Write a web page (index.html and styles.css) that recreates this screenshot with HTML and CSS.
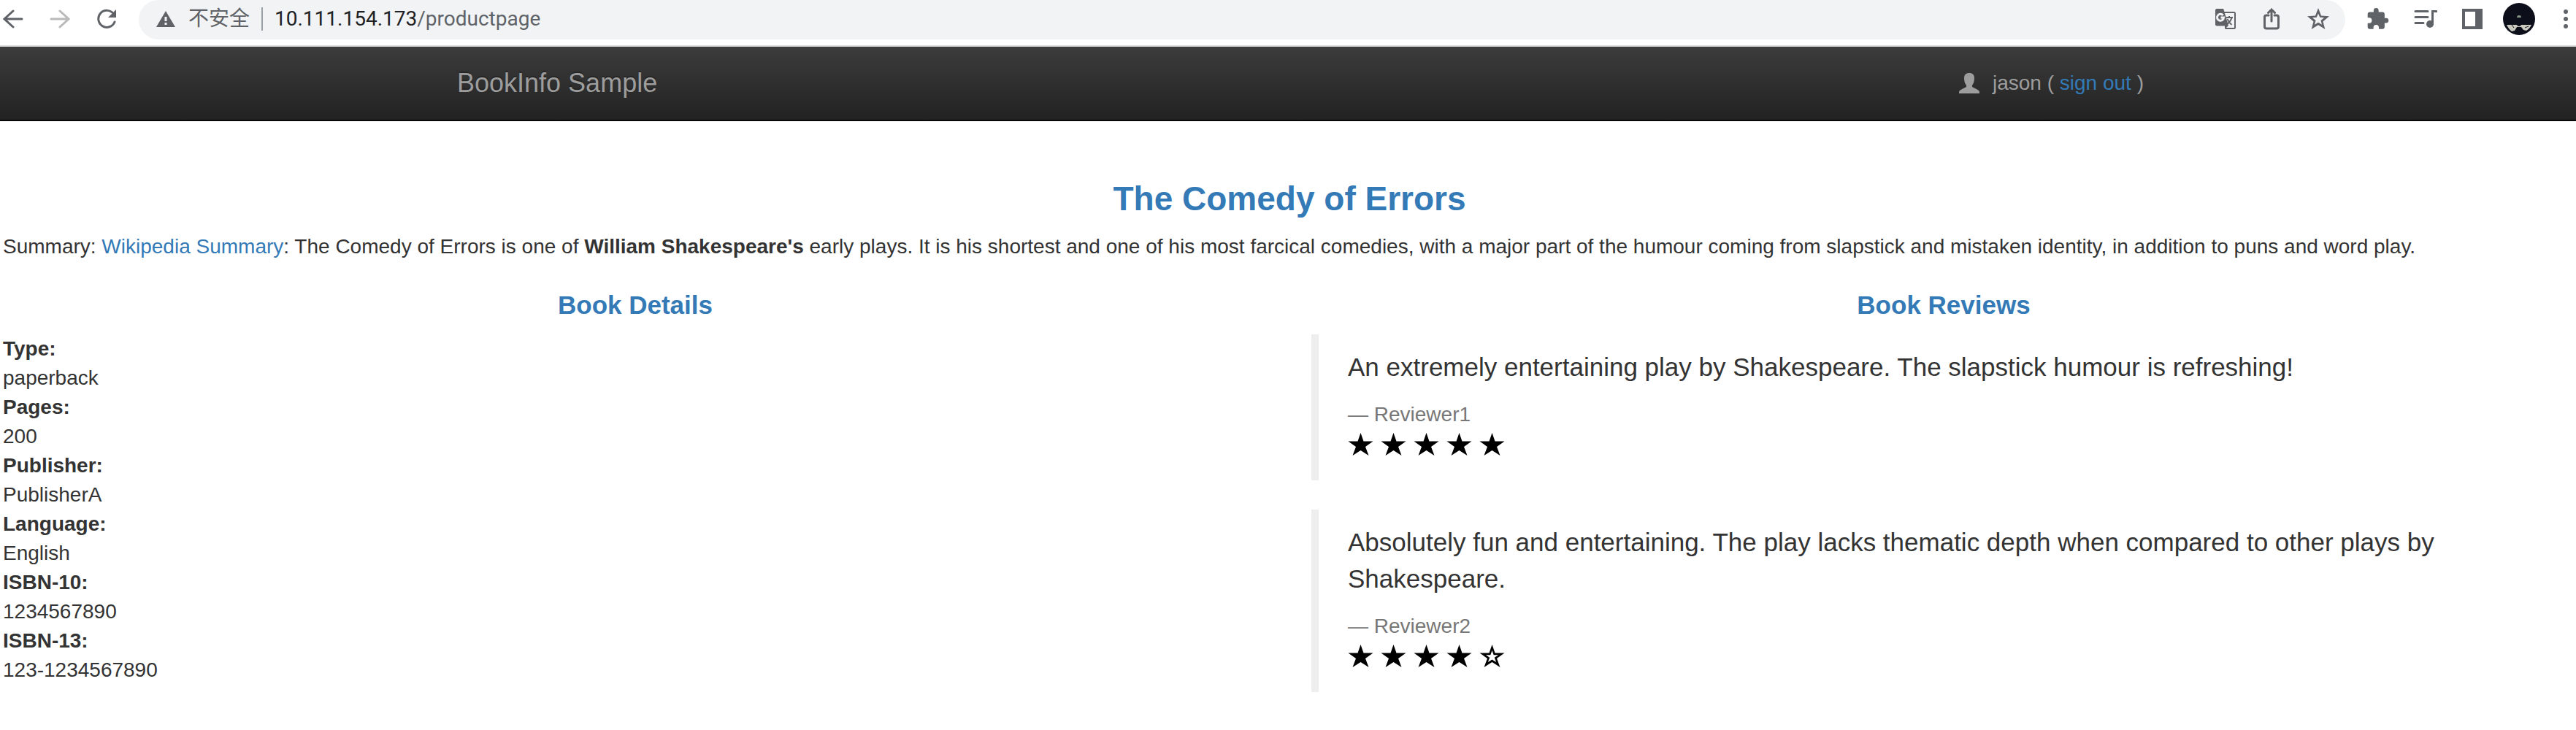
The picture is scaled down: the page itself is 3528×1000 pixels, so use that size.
FILE: index.html
```html
<!DOCTYPE html>
<html lang="en">
<head>
<meta charset="utf-8">
<meta name="viewport" content="width=device-width, initial-scale=1">
<title>Simple Bookstore App</title>
<link rel="stylesheet" href="styles.css">
</head>
<body>
<svg class="sprite" aria-hidden="true">
  <symbol id="star" viewBox="0 0 34 32"><path d="M17 0l4 11.500h13L23.500 19 28 31 17 24 6 31l4.500-12L0 11.500h13z"/></symbol>
  <symbol id="star-empty" viewBox="0 0 34 32"><path fill-rule="evenodd" d="M17 0l4 11.500h13L23.500 19 28 31 17 24 6 31l4.500-12L0 11.500h13zM17 8l-2.200 6.300H8.500l5.200 3.500-2.300 6.200L17 20.400l5.600 3.600-2.300-6.200 5.200-3.500h-6.300z"/></symbol>
</svg>

<header class="browser">
  <div class="browser-nav">
    <button class="tool" aria-label="Back"><svg width="28" height="28" viewBox="0 0 28 28" class="line"><path d="M26 14H2M14 3L2 14l12 11"/></svg></button>
    <button class="tool tool-off" aria-label="Forward"><svg width="28" height="28" viewBox="0 0 28 28" class="line"><path d="M2 14h24M14 3l12 11-12 11"/></svg></button>
    <button class="tool" aria-label="Reload"><svg width="28" height="28" viewBox="0 0 28 28"><path class="line" d="M23.500 7A11.500 11.500 0 1 0 25 18"/><path d="M27 1v11H16z"/></svg></button>
  </div>
  <div class="address">
    <svg width="26" height="22" viewBox="0 0 26 22" class="warn"><path fill-rule="evenodd" d="M13 0l13 22H0zM11.500 8v6h3V8zm0 8v3h3v-3z"/></svg>
    <span class="insecure">不安全</span>
    <span class="divider"></span>
    <span class="url"><span class="host">10.111.154.173</span>/productpage</span>
    <div class="address-tools">
      <button class="tool" aria-label="Translate">
        <svg width="28" height="28" viewBox="0 0 28 28">
          <path class="thin" d="M12 5h13.500a1.500 1.500 0 0 1 1.500 1.500v19a1.500 1.500 0 0 1-1.500 1.500H14"/>
          <path class="thin" d="M15 12h9M19 10v2M22.500 12c-1 4-3 6.500-6 9M16.500 14c1 3 3 5.500 6 8"/>
          <path d="M2 0h8.500a1 1 0 0 1 1 1L18 23l-5 5v-4.500H2a2 2 0 0 1-2-2V2a2 2 0 0 1 2-2z"/>
          <path class="glyph-g" d="M10.500 9A4.500 4.500 0 1 0 11.500 12H7.500"/>
        </svg>
      </button>
      <button class="tool" aria-label="Share"><svg width="22" height="30" viewBox="0 0 22 30" class="line"><path d="M7 10H4a2.500 2.500 0 0 0-2.500 2.500v13A2.500 2.500 0 0 0 4 28h14a2.500 2.500 0 0 0 2.500-2.500v-13A2.500 2.500 0 0 0 18 10h-3M11 18V2M6.500 6.500L11 2l4.500 4.500"/></svg></button>
      <button class="tool" aria-label="Bookmark"><svg width="30" height="30" viewBox="0 0 30 30"><path fill-rule="evenodd" d="M15 0l4 10.500 11 .8-8.500 7.200L24.300 29 15 23.300 5.700 29l2.800-10.500L0 11.300l11-.8zM15 7.500l-2.200 5.300-5.800.5 4.500 3.700-1.500 5.800 5-3 5 3-1.500-5.800 4.500-3.700-5.800-.5z"/></svg></button>
    </div>
  </div>
  <div class="browser-tools">
    <div class="extension-tools">
      <button class="tool" aria-label="Extensions"><svg width="30" height="30" viewBox="2 1 21 22"><path d="M20.500 11H19V7c0-1.100-.9-2-2-2h-4V3.500a2.500 2.500 0 0 0-5 0V5H4c-1.100 0-2 .9-2 2v3.800h1.500a2.700 2.700 0 0 1 0 5.400H2V20c0 1.100.9 2 2 2h3.800v-1.500a2.700 2.700 0 0 1 5.400 0V22H17c1.100 0 2-.9 2-2v-4h1.500a2.500 2.500 0 0 0 0-5z"/></svg></button>
      <button class="tool" aria-label="Media"><svg width="32" height="28" viewBox="0 0 32 28"><path class="line" d="M2 3.500h17M2 11.500h17M2 19.500h11"/><path d="M24 2h7a1 1 0 0 1 1 1v2h-5v17h-3z"/><circle cx="22" cy="21" r="5"/></svg></button>
      <button class="tool" aria-label="Side panel"><svg width="28" height="28" viewBox="0 0 28 28"><path fill-rule="evenodd" d="M0 0h28v28H0zM4 4v20h14V4z"/></svg></button>
    </div>
    <div class="profile-tools">
      <button class="tool" aria-label="Profile">
        <svg width="44" height="44" viewBox="0 0 44 44">
          <circle cx="22" cy="22" r="22" fill="#0c0f19"/>
          <path d="M5 30h34c-2 4-4 6-7 8l-4-1-3-4h-6l-3 5-4 1c-3-2-5-5-7-9z" fill="#c9c9c0"/>
          <path d="M19 20a3 3 0 0 1 6 0z" fill="#8a9a8a"/>
          <circle cx="22" cy="29" r="3" fill="#0c0f19"/>
          <path d="M12 30l3 4M30 34l5-2" stroke="#0c0f19"/>
        </svg>
      </button>
      <button class="tool" aria-label="Menu"><svg width="8" height="28" viewBox="0 0 8 28"><circle cx="4" cy="4" r="3"/><circle cx="4" cy="14" r="3"/><circle cx="4" cy="24" r="3"/></svg></button>
    </div>
  </div>
</header>

<nav class="navbar">
  <div class="navbar-inner">
    <a class="brand" href="#">BookInfo Sample</a>
    <p class="user">
      <svg width="28" height="28" viewBox="0 0 28 28"><path d="M14 0c4.500 0 7 2.500 7 7 0 5-1.500 8-3 10v2c3 2 7 3 9 5 1 1 1 2 1 4H0c0-2 0-3 1-4 2-2 6-3 9-5v-2c-1.500-2-3-5-3-10 0-4.500 2.500-7 7-7z"/></svg>
      <span>jason ( <a href="#">sign out</a> )</span>
    </p>
  </div>
</nav>

<main class="page">
  <h3 class="title">The Comedy of Errors</h3>
  <p class="summary">Summary: <a href="#">Wikipedia Summary</a>: The Comedy of Errors is one of <b>William Shakespeare's</b> early plays. It is his shortest and one of his most farcical comedies, with a major part of the humour coming from slapstick and mistaken identity, in addition to puns and word play.</p>
  <div class="columns">
    <section>
      <h4 class="subtitle">Book Details</h4>
      <dl class="details">
        <dt>Type:</dt><dd>paperback</dd>
        <dt>Pages:</dt><dd>200</dd>
        <dt>Publisher:</dt><dd>PublisherA</dd>
        <dt>Language:</dt><dd>English</dd>
        <dt>ISBN-10:</dt><dd>1234567890</dd>
        <dt>ISBN-13:</dt><dd>123-1234567890</dd>
      </dl>
    </section>
    <section>
      <h4 class="subtitle">Book Reviews</h4>
      <blockquote class="review">
        <p>An extremely entertaining play by Shakespeare. The slapstick humour is refreshing!</p>
        <small>— Reviewer1</small>
        <div class="stars" role="img" aria-label="5 stars">
          <svg><use href="#star"/></svg><svg><use href="#star"/></svg><svg><use href="#star"/></svg><svg><use href="#star"/></svg><svg><use href="#star"/></svg>
        </div>
      </blockquote>
      <blockquote class="review">
        <p>Absolutely fun and entertaining. The play lacks thematic depth when compared to other plays by Shakespeare.</p>
        <small>— Reviewer2</small>
        <div class="stars" role="img" aria-label="4 stars">
          <svg><use href="#star"/></svg><svg><use href="#star"/></svg><svg><use href="#star"/></svg><svg><use href="#star"/></svg><svg><use href="#star-empty"/></svg>
        </div>
      </blockquote>
    </section>
  </div>
</main>
</body>
</html>
```

FILE: styles.css
```css
* { box-sizing: border-box; }

body {
  margin: 0;
  background: #fff;
  color: #333;
  font: 28px/40px "Liberation Sans", Arial, sans-serif;
}

a { color: #337ab7; text-decoration: none; }
h3, h4, p, dl, dd, blockquote { margin: 0; }
.sprite { display: none; }

/* Browser toolbar */
.browser {
  display: flex;
  align-items: flex-start;
  height: 64px;
  padding-left: 4px;
  border-bottom: 2px solid #d9dbdd;
  font-family: Roboto, "Noto Sans CJK SC", sans-serif;
}

.tool {
  display: flex;
  align-items: center;
  height: 52px;
  padding: 0;
  border: 0;
  background: none;
  color: #5f6368;
}
.tool svg, .warn { fill: currentColor; }
.tool-off { color: #bababa; }
.tool .line, .tool svg.line {
  fill: none;
  stroke: currentColor;
  stroke-width: 3;
  stroke-linecap: round;
}
.thin { fill: none; stroke: currentColor; stroke-width: 2; }
.glyph-g { fill: none; stroke: #f1f3f4; stroke-width: 3; }

.browser-nav { display: flex; gap: 36px; width: 186px; }

.address {
  display: flex;
  flex: 1;
  align-items: center;
  height: 54px;
  padding: 0 22px 2px 24px;
  border-radius: 27px;
  background: #f1f3f4;
  color: #5f6368;
}
.insecure { margin-left: 18px; }
.divider { width: 2px; height: 32px; margin: 0 16px; background: #9aa0a6; }
.host { color: #202124; }
.address-tools { display: flex; gap: 38px; margin-left: auto; }

.browser-tools { display: flex; gap: 28px; padding: 0 10px 0 30px; }
.extension-tools { display: flex; gap: 34px; }
.profile-tools { display: flex; gap: 38px; }

/* Site navigation */
.navbar {
  height: 102px;
  padding-left: 4px;
  border-bottom: 2px solid #080808;
  background: linear-gradient(#3c3c3c, #222);
  color: #9d9d9d;
}
.navbar-inner {
  display: flex;
  align-items: center;
  justify-content: space-between;
  max-width: 2340px;
  height: 100px;
  margin: 0 auto;
  padding-left: 30px;
}
.brand { color: #9d9d9d; font-size: 36px; text-shadow: 0 -2px 0 rgba(0, 0, 0, 0.25); }
.user { display: flex; align-items: center; gap: 18px; }
.user svg { fill: currentColor; }

/* Product page */
.page { padding: 80px 0 0 4px; }
.title, .subtitle { color: #337ab7; text-align: center; font-weight: bold; }
.title { font-size: 46px; line-height: 52px; }
.summary { margin: 20px 0; }
.columns { display: grid; grid-template-columns: 1fr 1fr; gap: 60px; }
.subtitle { margin: 20px 0; font-size: 35px; }
.details dt { font-weight: bold; }

.review {
  margin-bottom: 40px;
  padding: 20px 40px;
  border-left: 10px solid #eee;
}
.review p { margin-bottom: 20px; font-size: 35px; line-height: 50px; }
.review small { display: block; color: #777; font-size: 28px; }
.stars { display: flex; gap: 10px; height: 50px; padding-top: 5px; }
.stars svg { width: 35px; height: 32px; }
```
